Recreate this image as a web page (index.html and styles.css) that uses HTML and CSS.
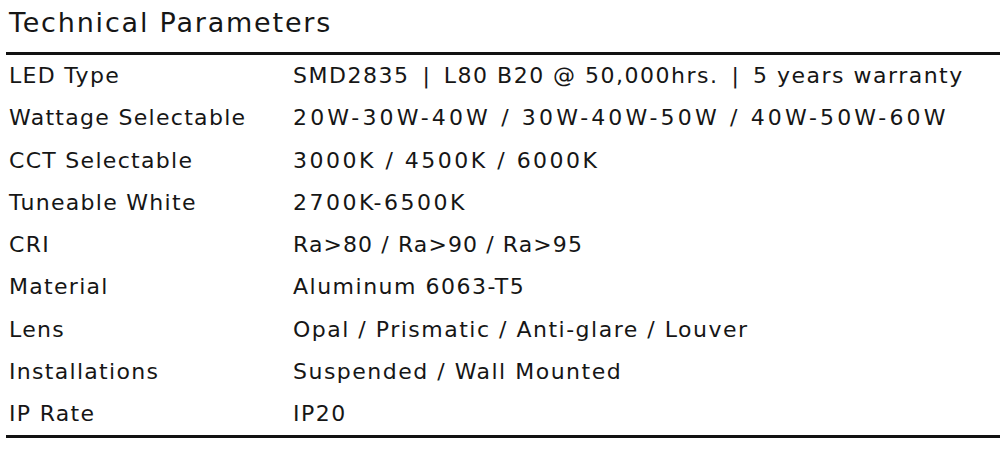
FILE: index.html
```html
<!DOCTYPE html>
<html lang="en">
<head>
<meta charset="utf-8">
<title>Technical Parameters</title>
<link rel="stylesheet" href="styles.css">
</head>
<body>
<section class="specs">
  <h2 class="specs-title">Technical Parameters</h2>
  <div class="specs-table">
    <div class="row"><div class="label">LED Type</div><div class="value">SMD2835<span class="sep">|</span>L80 B20 @ 50,000hrs.<span class="sep">|</span>5 years warranty</div></div>
    <div class="row"><div class="label">Wattage Selectable</div><div class="value num-wide">20W-30W-40W / 30W-40W-50W / 40W-50W-60W</div></div>
    <div class="row"><div class="label">CCT Selectable</div><div class="value num">3000K / 4500K / 6000K</div></div>
    <div class="row"><div class="label">Tuneable White</div><div class="value num">2700K-6500K</div></div>
    <div class="row"><div class="label">CRI</div><div class="value tight">Ra&gt;80 / Ra&gt;90 / Ra&gt;95</div></div>
    <div class="row"><div class="label">Material</div><div class="value">Aluminum 6063-T5</div></div>
    <div class="row"><div class="label">Lens</div><div class="value">Opal / Prismatic / Anti-glare / Louver</div></div>
    <div class="row"><div class="label">Installations</div><div class="value">Suspended / Wall Mounted</div></div>
    <div class="row"><div class="label">IP Rate</div><div class="value">IP20</div></div>
  </div>
</section>
</body>
</html>
```
FILE: styles.css
```css
html, body {
  margin: 0;
  padding: 0;
  background: #fff;
}
body {
  font-family: "DejaVu Sans", sans-serif;
  color: #161616;
}
.specs-title {
  margin: 0;
  height: 52px;
  box-sizing: border-box;
  padding: 3px 0 0 9px;
  font-size: 27px;
  font-weight: normal;
  line-height: 40px;
  letter-spacing: 1.8px;
  white-space: nowrap;
}
.specs-table {
  margin-left: 6px;
  border-top: 3px solid #111;
  border-bottom: 3px solid #111;
}
.row {
  display: grid;
  grid-template-columns: 284px 1fr;
  height: 42.25px;
  line-height: 42.25px;
  padding-left: 3px;
  font-size: 22px;
  white-space: nowrap;
}
.label {
  letter-spacing: 1.3px;
}
.value {
  letter-spacing: 1.5px;
}
.value.num {
  letter-spacing: 2.5px;
}
.value.num-wide {
  letter-spacing: 3.15px;
}
.value.tight {
  letter-spacing: 1.1px;
}
.sep {
  margin: 0 12.5px 0 13px;
}
```
